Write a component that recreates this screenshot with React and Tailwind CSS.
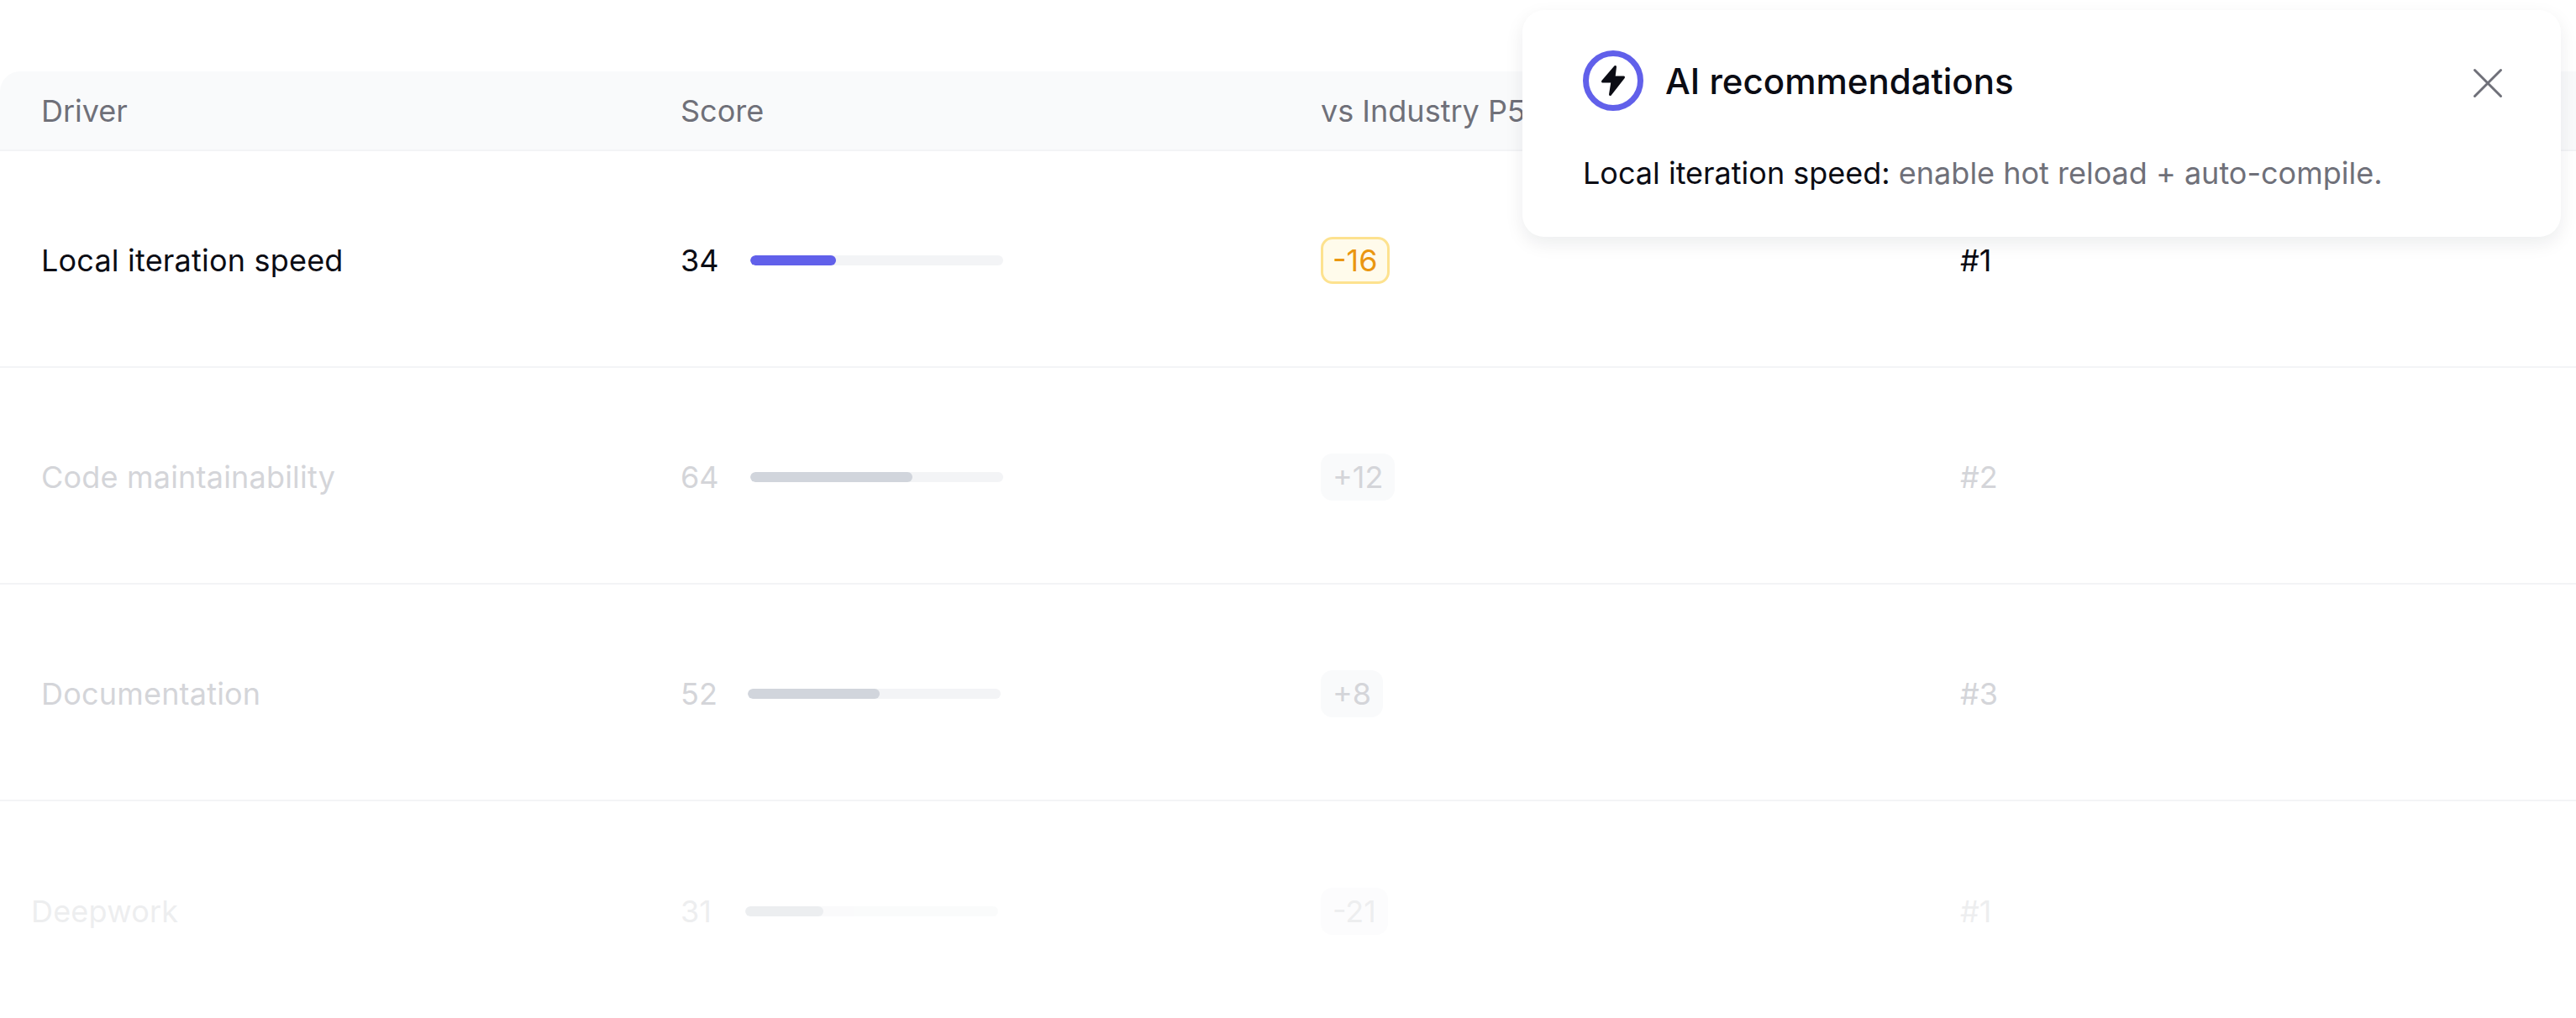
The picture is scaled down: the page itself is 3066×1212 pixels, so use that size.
const rows = [
  { name: "Local iteration speed", score: 34, delta: "-16", rank: "#1", active: true },
  { name: "Code maintainability", score: 64, delta: "+12", rank: "#2" },
  { name: "Documentation", score: 52, delta: "+8", rank: "#3", barShift: "-ml-[3px]" },
  { name: "Deepwork", score: 31, delta: "-21", rank: "#1", faded: true, barShift: "-ml-[6px]" },
];

function Row({ row }) {
  const text = row.active ? "text-[#0b0c14]" : "text-[#d4d5d9]";
  const fade = row.faded ? "opacity-40" : "";
  return (
    <div className={`grid h-[258px] grid-cols-[761px_762px_761px_1fr] items-center pl-[49px] pt-[3px] text-[36px] ${row.faded ? "" : "border-b-[2.5px] border-gray-100"} ${text}`}>
      <div className={`tracking-[0.2px] ${row.faded ? "-ml-[12px] opacity-40" : ""}`}>{row.name}</div>
      <div className={`flex items-center ${fade}`}>
        <span className="w-[83px]">{row.score}</span>
        <div className={`h-[12px] w-[301px] overflow-hidden rounded-full bg-gray-100 ${row.barShift || ""}`}>
          <div
            className={`h-full rounded-full ${row.active ? "bg-[#6160ea]" : "bg-gray-300"}`}
            style={{ width: `${row.score}%` }}
          />
        </div>
      </div>
      <div className={fade}>
        {row.active ? (
          <span className="inline-flex h-[56px] items-center rounded-[14px] border-[3px] border-[#fde28f] bg-[#fffbeb] px-[11px] text-[#ea960f]">
            {row.delta}
          </span>
        ) : (
          <span className="inline-flex h-[56px] items-center rounded-[14px] bg-gray-50 px-[14px]">
            {row.delta}
          </span>
        )}
      </div>
      <div className={fade}>{row.rank}</div>
    </div>
  );
}

export default function App() {
  return (
    <div className="relative h-[1212px] overflow-hidden bg-white pt-[85px] font-['Inter',sans-serif]">
      <div className="grid h-[95px] grid-cols-[761px_762px_1fr] items-center rounded-tl-[24px] border-b-2 border-gray-100 bg-gray-50 pl-[49px] text-[36px] text-[#6f7079]">
        <div>Driver</div>
        <div>Score</div>
        <div>vs Industry P50</div>
      </div>
      {rows.map(row => (
        <Row key={row.name} row={row} />
      ))}

      {/* popover */}
      <div className="absolute left-[1812px] top-[12px] w-[1236px] rounded-[26px] bg-white pb-[49px] pl-[72px] pr-[69px] pt-[48px] shadow-[0_8px_22px_rgba(17,24,39,0.08)]">
        <div className="flex items-center justify-between">
          <div className="flex items-center gap-[26px]">
            <div className="flex h-[72px] w-[72px] items-center justify-center rounded-full border-[7px] border-[#6160ea]">
              <svg width="30" height="38" viewBox="0 0 30 38" className="text-[#0b0c14]">
                <path
                  d="M17.500 2.500 2.500 20h11.500l-2.500 15.500L27.500 15H16z"
                  fill="currentColor"
                  stroke="currentColor"
                  strokeWidth="3"
                  strokeLinejoin="round"
                />
              </svg>
            </div>
            <h2 className="text-[42px] font-medium text-[#0b0c14]">AI recommendations</h2>
          </div>
          <svg width="36" height="36" viewBox="0 0 36 36" className="mt-[6px] text-[#6f7079]">
            <path d="M2.500 2.500 33.500 33.500M33.500 2.500 2.500 33.500" stroke="currentColor" strokeWidth="3" strokeLinecap="round" />
          </svg>
        </div>
        <p className="mt-[47px] text-[36px] leading-[54px] text-[#6f7079]">
          <span className="text-[#0b0c14]">Local iteration speed:</span> enable hot reload + auto-compile.
        </p>
      </div>
    </div>
  );
}
